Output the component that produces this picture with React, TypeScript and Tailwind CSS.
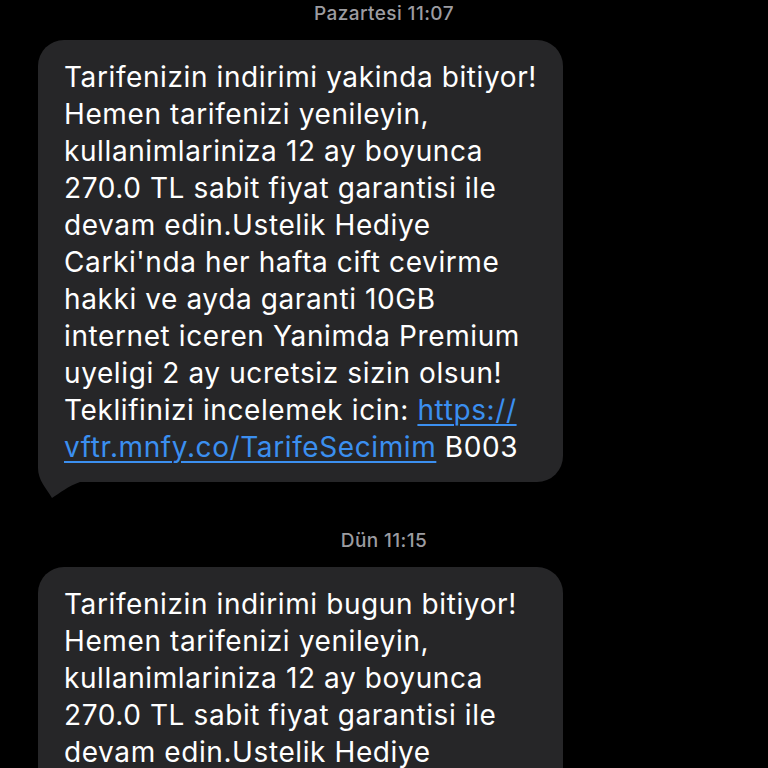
import React from "react";

const link = "text-[#3b8ff0] underline decoration-[1.5px] underline-offset-[4px]";

function Bubble({ lines, tail }: { lines: React.ReactNode[]; tail?: boolean }) {
  return (
    <div className="relative w-[525px] rounded-[26px] bg-[#262628] pt-[19px] pb-[16px] pl-[26px] pr-[18px] text-[28px] leading-[37px] tracking-[0.6px] text-white">
      {tail && (
        <svg className="absolute left-0 bottom-[-16px]" width="44" height="50" viewBox="0 0 44 50">
          <path d="M0 0 L0 20 C0 32 8 40 14 50 C22 45 30 38 42 34 L42 0 Z" fill="#262628" />
        </svg>
      )}
      <div className="relative">
        {lines.map((l, i) => (
          <div key={i} className="whitespace-nowrap">
            {l}
          </div>
        ))}
      </div>
    </div>
  );
}

function Stamp({ text }: { text: string }) {
  return (
    <div className="text-center text-[19px] font-medium leading-[22px] tracking-[0.4px] text-[#9c9ca1]">
      {text}
    </div>
  );
}

export default function App() {
  const first = [
    "Tarifenizin indirimi yakinda bitiyor!",
    "Hemen tarifenizi yenileyin,",
    "kullanimlariniza 12 ay boyunca",
    "270.0 TL sabit fiyat garantisi ile",
    "devam edin.Ustelik Hediye",
    "Carki'nda her hafta cift cevirme",
    "hakki ve ayda garanti 10GB",
    "internet iceren Yanimda Premium",
    "uyeligi 2 ay ucretsiz sizin olsun!",
    <>
      Teklifinizi incelemek icin: <span className={link}>https://</span>
    </>,
    <>
      <span className={link}>vftr.mnfy.co/TarifeSecimim</span> B003
    </>,
  ];
  const second = [
    "Tarifenizin indirimi bugun bitiyor!",
    "Hemen tarifenizi yenileyin,",
    "kullanimlariniza 12 ay boyunca",
    "270.0 TL sabit fiyat garantisi ile",
    "devam edin.Ustelik Hediye",
    "Carki'nda her hafta cift cevirme",
    "hakki ve ayda garanti 10GB",
  ];
  return (
    <div
      className="h-[768px] w-[768px] overflow-hidden bg-black pl-[38px]"
      style={{ fontFamily: "Inter, 'Noto Sans', sans-serif" }}
    >
      <div className="w-[692px] pt-[3px]">
        <Stamp text="Pazartesi 11:07" />
      </div>
      <div className="mt-[15px]">
        <Bubble lines={first} tail />
      </div>
      <div className="mt-[48px] w-[692px]">
        <Stamp text="Dün 11:15" />
      </div>
      <div className="mt-[15px]">
        <Bubble lines={second} />
      </div>
    </div>
  );
}
